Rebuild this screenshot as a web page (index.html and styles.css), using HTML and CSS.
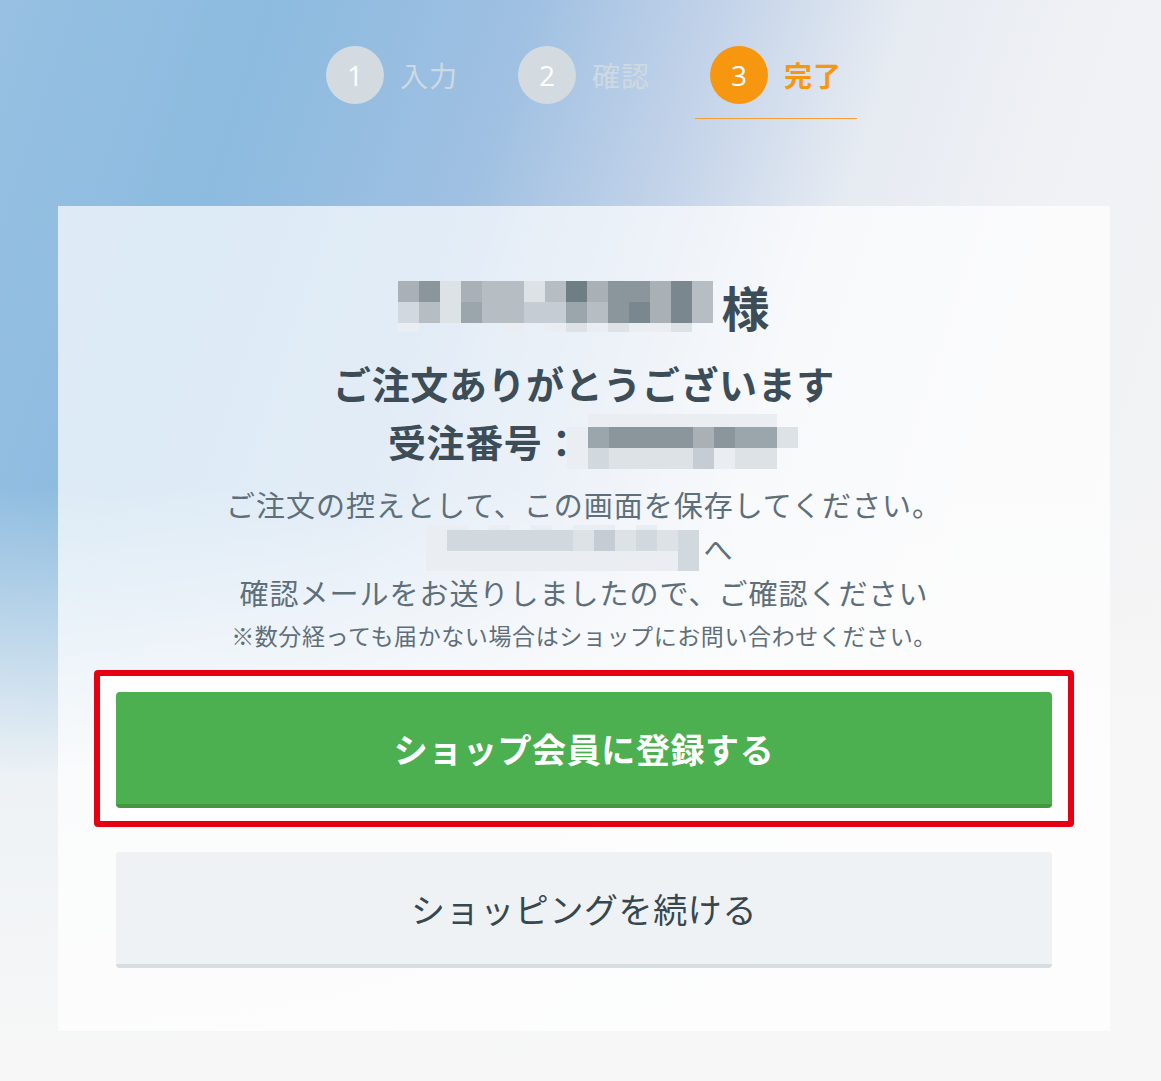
FILE: index.html
```html
<!DOCTYPE html>
<html lang="ja">
<head>
  <meta charset="UTF-8">
  <meta name="viewport" content="width=device-width, initial-scale=1.0">
  <title>ご注文完了</title>
  <link rel="stylesheet" href="styles.css">
</head>
<body>

  <div class="page">

    <ol class="steps">
      <li class="step"><span class="step-num">1</span><span class="step-label">入力</span></li>
      <li class="step"><span class="step-num">2</span><span class="step-label">確認</span></li>
      <li class="step current"><span class="step-num">3</span><span class="step-label">完了</span></li>
    </ol>

    <div class="card">

      <p class="customer">
        <span class="mosaic mosaic-name">
          <span class="c6"></span><span class="c8"></span><span class="c2"></span><span class="c6"></span><span class="c5"></span><span class="c5"></span><span class="c2"></span><span class="c5"></span><span class="c10"></span><span class="c6"></span><span class="c8"></span><span class="c8"></span><span class="c6"></span><span class="c9"></span><span class="c5"></span>
          <span class="c3"></span><span class="c5"></span><span class="c2"></span><span class="c7"></span><span class="c5"></span><span class="c5"></span><span class="c4"></span><span class="c4"></span><span class="c7"></span><span class="c5"></span><span class="c8"></span><span class="c9"></span><span class="c6"></span><span class="c9"></span><span class="c5"></span>
          <span class="c1"></span><span class="c0"></span><span class="c0"></span><span class="c0"></span><span class="c0"></span><span class="c1"></span><span class="c0"></span><span class="c1"></span><span class="c2"></span><span class="c1"></span><span class="c2"></span><span class="c1"></span><span class="c1"></span><span class="c2"></span><span class="c0"></span>
        </span>
        <span class="honorific">様</span>
      </p>

      <h1 class="thanks">
        <span class="thanks-line">ご注文ありがとうございます</span>
        <span class="thanks-line order-no">受注番号：<span class="mosaic mosaic-order">
          <span class="c0"></span><span class="c1"></span><span class="c1"></span><span class="c1"></span><span class="c1"></span><span class="c1"></span><span class="c1"></span><span class="c1"></span><span class="c1"></span><span class="c1"></span><span class="c0"></span>
          <span class="c1"></span><span class="c7"></span><span class="c8"></span><span class="c8"></span><span class="c8"></span><span class="c8"></span><span class="c6"></span><span class="c8"></span><span class="c7"></span><span class="c7"></span><span class="c2"></span>
          <span class="c1"></span><span class="c3"></span><span class="c2"></span><span class="c2"></span><span class="c2"></span><span class="c2"></span><span class="c4"></span><span class="c1"></span><span class="c2"></span><span class="c2"></span><span class="c0"></span>
        </span></span>
      </h1>

      <div class="notice">
        <p>ご注文の控えとして、この画面を保存してください。</p>
        <p class="mail-to">
          <span class="mosaic mosaic-mail">
            <span class="c1"></span><span class="c1"></span><span class="c0"></span><span class="c1"></span><span class="c0"></span><span class="c1"></span><span class="c0"></span><span class="c1"></span><span class="c1"></span><span class="c0"></span><span class="c1"></span><span class="c0"></span><span class="c0"></span>
            <span class="c1"></span><span class="c3"></span><span class="c3"></span><span class="c3"></span><span class="c3"></span><span class="c3"></span><span class="c3"></span><span class="c2"></span><span class="c4"></span><span class="c2"></span><span class="c3"></span><span class="c2"></span><span class="c3"></span>
            <span class="c1"></span><span class="c1"></span><span class="c1"></span><span class="c1"></span><span class="c1"></span><span class="c1"></span><span class="c1"></span><span class="c1"></span><span class="c1"></span><span class="c1"></span><span class="c1"></span><span class="c1"></span><span class="c3"></span>
          </span>へ
        </p>
        <p>確認メールをお送りしましたので、ご確認ください</p>
        <p class="small">※数分経っても届かない場合はショップにお問い合わせください。</p>
      </div>

      <div class="highlight">
        <a class="btn btn-primary" href="#">ショップ会員に登録する</a>
      </div>

      <a class="btn btn-secondary" href="#">ショッピングを続ける</a>

    </div>

  </div>

</body>
</html>
```

FILE: styles.css
```css
html, body {
  margin: 0;
  padding: 0;
}

body {
  min-height: 1081px;
  font-family: "Noto Sans CJK JP", "Noto Sans", sans-serif;
  color: #3d4d58;
  background:
    linear-gradient(to bottom, rgba(248, 248, 248, 0) 45%, rgba(248, 248, 248, 0.9) 72%, #f7f7f7 100%),
    linear-gradient(108deg, #97c0e2 0%, #8cbbdf 18%, #9fc0e2 35%, #c3d3e9 48%, #e6ebf2 60%, #f1f2f5 75%, #f3f3f4 100%);
}

.page {
  padding: 46px 51px 50px 58px;
}

/* progress steps */

.steps {
  list-style: none;
  margin: 0;
  padding: 0;
  display: flex;
  justify-content: center;
  gap: 30px;
}

.step {
  display: flex;
  align-items: center;
  gap: 16px;
  padding: 0 15px 14px;
  border-bottom: 1px solid transparent;
}

.step-num {
  width: 58px;
  height: 58px;
  border-radius: 50%;
  background: #d3dbe0;
  color: #fff;
  font-family: "Open Sans", "Noto Sans", sans-serif;
  font-size: 28px;
  display: flex;
  align-items: center;
  justify-content: center;
}

.step-label {
  font-size: 28px;
  color: #cfd9e2;
  width: 58px;
  letter-spacing: 1px;
}

.step.current {
  border-bottom-color: #f4a13a;
}

.step.current .step-num {
  background: #f7960f;
}

.step.current .step-label {
  color: #f7960f;
  font-weight: 700;
}

/* card */

.card {
  margin-top: 87px;
  padding: 64px 58px 63px;
  background: rgba(255, 255, 255, 0.7);
  text-align: center;
}

.customer {
  margin: 0;
  height: 72px;
  display: flex;
  align-items: center;
  justify-content: center;
  gap: 8px;
}

.honorific {
  font-size: 48px;
  font-weight: 700;
  line-height: 1;
}

.thanks {
  margin: 12px 0 0;
  font-size: 38px;
  font-weight: 700;
  line-height: 58px;
  letter-spacing: 0.6px;
}

.thanks-line {
  display: flex;
  align-items: center;
  justify-content: center;
  height: 58px;
}

.order-no {
  padding-left: 18px;
}

.order-no .mosaic {
  margin-left: -14px;
}

/* blurred-out personal data */

.mosaic {
  display: inline-grid;
  grid-auto-columns: 21px;
}

.mosaic-name {
  grid-template-columns: repeat(15, 21px);
  grid-template-rows: 21px 21px 9px;
}

.mosaic-order {
  grid-template-columns: repeat(11, 21px);
  grid-template-rows: 13px 21px 21px;
}

.mosaic-mail {
  grid-template-columns: repeat(13, 21px);
  grid-template-rows: 5px 21px 20px;
}

.c0 { background: transparent; }
.c1 { background: #eaeef2; }
.c2 { background: #dde2e7; }
.c3 { background: #d1d8de; }
.c4 { background: #c6ccd3; }
.c5 { background: #b6bdc3; }
.c6 { background: #a9b1b7; }
.c7 { background: #9ba5ac; }
.c8 { background: #8a959c; }
.c9 { background: #7b878e; }
.c10 { background: #6f7d85; }

.notice {
  margin-top: 12px;
  color: #5e6f7a;
  font-size: 29px;
  line-height: 44px;
  letter-spacing: 1px;
}

.notice p {
  margin: 0;
}

.mail-to {
  display: flex;
  align-items: center;
  justify-content: center;
  gap: 4px;
  height: 44px;
  padding-right: 8px;
}

.notice .small {
  margin-top: 4px;
  font-size: 23px;
  line-height: 34px;
  letter-spacing: 0.6px;
}

/* buttons */

.highlight {
  margin: 18px -22px 0;
  padding: 16px 16px 13px;
  border: 6px solid #e60012;
  border-radius: 4px;
  background: #fff;
}

.btn {
  display: flex;
  align-items: center;
  justify-content: center;
  height: 112px;
  border-radius: 4px;
  font-size: 34px;
  text-decoration: none;
  letter-spacing: 1px;
}

.btn-primary {
  background: #4caf50;
  border-bottom: 4px solid #43983f;
  color: #fff;
  font-weight: 700;
  letter-spacing: 0.6px;
}

.btn-secondary {
  margin-top: 25px;
  background: #eef2f4;
  border-bottom: 4px solid #d6dee2;
  color: #37474f;
  letter-spacing: 0.6px;
}
```
